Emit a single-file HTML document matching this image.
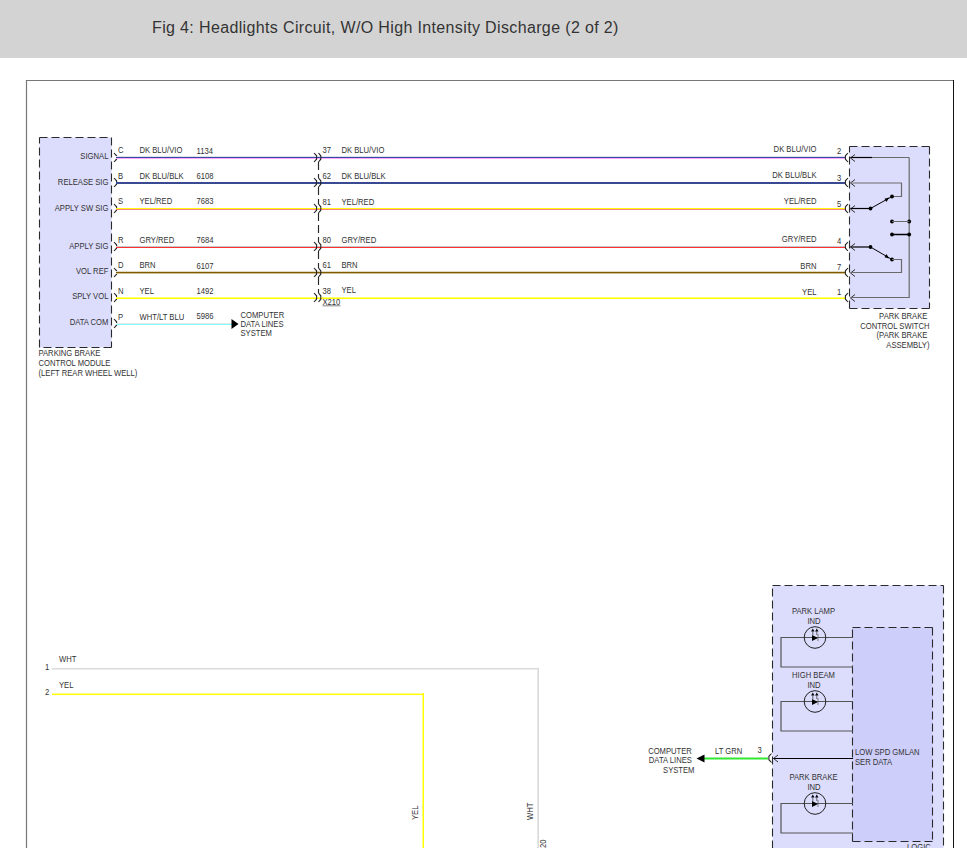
<!DOCTYPE html>
<html><head><meta charset="utf-8">
<style>
html,body{margin:0;padding:0;background:#fff;width:967px;height:868px;overflow:hidden;}
#hdr{position:absolute;left:0;top:0;width:967px;height:58px;background:#d3d3d3;}
#hdr span{position:absolute;left:152px;top:19px;font-family:"Liberation Sans",sans-serif;font-size:16px;letter-spacing:0.36px;color:#333;white-space:nowrap;}
svg{position:absolute;left:0;top:0;}
svg text{font-family:"Liberation Sans",sans-serif;fill:#333333;white-space:pre;}
</style></head><body>
<div id="hdr"><span>Fig 4: Headlights Circuit, W/O High Intensity Discharge (2 of 2)</span></div>
<svg width="967" height="868" viewBox="0 0 967 868">
<defs><clipPath id="c"><rect x="0" y="58" width="967" height="790"/></clipPath></defs>
<g clip-path="url(#c)">
<line x1="26.5" y1="80.5" x2="953" y2="80.5" stroke="#777" stroke-width="1.2" />
<line x1="26.5" y1="80" x2="26.5" y2="848" stroke="#777" stroke-width="1.2" />
<line x1="953.5" y1="80" x2="953.5" y2="848" stroke="#111" stroke-width="1" />
<rect x="39.5" y="137.5" width="72" height="210" fill="#dcdcfc"/>
<line x1="39.5" y1="137.5" x2="111.5" y2="137.5" stroke="#2a2a2a" stroke-width="1.1" stroke-dasharray="8 4"/>
<line x1="111.5" y1="137.5" x2="111.5" y2="347.5" stroke="#2a2a2a" stroke-width="1.1" stroke-dasharray="8 4"/>
<line x1="111.5" y1="347.5" x2="39.5" y2="347.5" stroke="#2a2a2a" stroke-width="1.1" stroke-dasharray="8 4"/>
<line x1="39.5" y1="347.5" x2="39.5" y2="137.5" stroke="#2a2a2a" stroke-width="1.1" stroke-dasharray="8 4"/>
<text transform="translate(108.4 159) scale(0.89 1)" text-anchor="end" font-size="8.6" >SIGNAL</text>
<path d="M114 153 L116.6 155.8 L116.6 159.2 L114 162" fill="none" stroke="#222" stroke-width="1.1"/>
<text transform="translate(118 153) scale(0.89 1)" text-anchor="start" font-size="8.6" >C</text>
<text transform="translate(139.5 153) scale(0.89 1)" text-anchor="start" font-size="8.6" >DK BLU/VIO</text>
<text transform="translate(196.5 153.5) scale(0.89 1)" text-anchor="start" font-size="8.6" >1134</text>
<rect x="116" y="157" width="729" height="1" fill="#3a48a0" />
<rect x="116" y="158" width="729" height="1" fill="#ffa8ff" />
<rect x="116" y="156" width="729" height="1" fill="#dde1ee" />
<text transform="translate(108.4 185) scale(0.89 1)" text-anchor="end" font-size="8.6" >RELEASE SIG</text>
<path d="M114 178 L116.6 180.8 L116.6 184.2 L114 187" fill="none" stroke="#222" stroke-width="1.1"/>
<text transform="translate(118 179) scale(0.89 1)" text-anchor="start" font-size="8.6" >B</text>
<text transform="translate(139.5 179) scale(0.89 1)" text-anchor="start" font-size="8.6" >DK BLU/BLK</text>
<text transform="translate(196.5 178.5) scale(0.89 1)" text-anchor="start" font-size="8.6" >6108</text>
<rect x="116" y="182" width="729" height="1" fill="#3a4a92" />
<rect x="116" y="183" width="729" height="1" fill="#3a4a92" />
<text transform="translate(108.4 211) scale(0.89 1)" text-anchor="end" font-size="8.6" >APPLY SW SIG</text>
<path d="M114 204 L116.6 206.8 L116.6 210.2 L114 213" fill="none" stroke="#222" stroke-width="1.1"/>
<text transform="translate(118 204) scale(0.89 1)" text-anchor="start" font-size="8.6" >S</text>
<text transform="translate(139.5 204) scale(0.89 1)" text-anchor="start" font-size="8.6" >YEL/RED</text>
<text transform="translate(196.5 203.5) scale(0.89 1)" text-anchor="start" font-size="8.6" >7683</text>
<rect x="116" y="208" width="729" height="1" fill="#fff810" />
<rect x="116" y="209" width="729" height="1" fill="#ff8080" />
<text transform="translate(108.4 249) scale(0.89 1)" text-anchor="end" font-size="8.6" >APPLY SIG</text>
<path d="M114 242 L116.6 244.8 L116.6 248.2 L114 251" fill="none" stroke="#222" stroke-width="1.1"/>
<text transform="translate(118 243) scale(0.89 1)" text-anchor="start" font-size="8.6" >R</text>
<text transform="translate(139.5 243) scale(0.89 1)" text-anchor="start" font-size="8.6" >GRY/RED</text>
<text transform="translate(196.5 242.5) scale(0.89 1)" text-anchor="start" font-size="8.6" >7684</text>
<rect x="116" y="246" width="729" height="1" fill="#c8c8c8" />
<rect x="116" y="247" width="729" height="1" fill="#ff3030" />
<text transform="translate(108.4 274) scale(0.89 1)" text-anchor="end" font-size="8.6" >VOL REF</text>
<path d="M114 268 L116.6 270.8 L116.6 274.2 L114 277" fill="none" stroke="#222" stroke-width="1.1"/>
<text transform="translate(118 268) scale(0.89 1)" text-anchor="start" font-size="8.6" >D</text>
<text transform="translate(139.5 268) scale(0.89 1)" text-anchor="start" font-size="8.6" >BRN</text>
<text transform="translate(196.5 268.5) scale(0.89 1)" text-anchor="start" font-size="8.6" >6107</text>
<rect x="116" y="272" width="729" height="1" fill="#7a5500" />
<rect x="116" y="273" width="729" height="1" fill="#9a7420" />
<rect x="116" y="271" width="729" height="3" fill="#ffffff" />
<rect x="116" y="271" width="729" height="1" fill="#e2d8c0" />
<rect x="116" y="272" width="729" height="1" fill="#7f5a00" />
<rect x="116" y="273" width="729" height="1" fill="#cdbd90" />
<text transform="translate(108.4 299) scale(0.89 1)" text-anchor="end" font-size="8.6" >SPLY VOL</text>
<path d="M114 293 L116.6 295.8 L116.6 299.2 L114 302" fill="none" stroke="#222" stroke-width="1.1"/>
<text transform="translate(118 294) scale(0.89 1)" text-anchor="start" font-size="8.6" >N</text>
<text transform="translate(139.5 294) scale(0.89 1)" text-anchor="start" font-size="8.6" >YEL</text>
<text transform="translate(196.5 293.5) scale(0.89 1)" text-anchor="start" font-size="8.6" >1492</text>
<rect x="116" y="297" width="729" height="1" fill="#ffff70" />
<rect x="116" y="298" width="729" height="1" fill="#ffff00" />
<text transform="translate(108.4 325) scale(0.89 1)" text-anchor="end" font-size="8.6" >DATA COM</text>
<path d="M114 319 L116.6 321.8 L116.6 325.2 L114 328" fill="none" stroke="#222" stroke-width="1.1"/>
<text transform="translate(118 320) scale(0.89 1)" text-anchor="start" font-size="8.6" >P</text>
<text transform="translate(139.5 320) scale(0.89 1)" text-anchor="start" font-size="8.6" >WHT/LT BLU</text>
<text transform="translate(196.5 318.5) scale(0.89 1)" text-anchor="start" font-size="8.6" >5986</text>
<rect x="116" y="323" width="116" height="1" fill="#e8e8e8" />
<rect x="116" y="324" width="116" height="1" fill="#80fcff" />
<path d="M231.5 319 L238.5 324 L231.5 329 Z" fill="#000"/>
<text transform="translate(240.5 318) scale(0.89 1)" text-anchor="start" font-size="8.6" >COMPUTER</text>
<text transform="translate(240.5 327) scale(0.89 1)" text-anchor="start" font-size="8.6" >DATA LINES</text>
<text transform="translate(240.5 336) scale(0.89 1)" text-anchor="start" font-size="8.6" >SYSTEM</text>
<text transform="translate(38.5 356) scale(0.89 1)" text-anchor="start" font-size="8.6" >PARKING BRAKE</text>
<text transform="translate(38.5 366) scale(0.89 1)" text-anchor="start" font-size="8.6" >CONTROL MODULE</text>
<text transform="translate(38.5 376) scale(0.89 1)" text-anchor="start" font-size="8.6" >(LEFT REAR WHEEL WELL)</text>
<path d="M314 153 L316.6 155.8 L316.6 159.2 L314 162" fill="none" stroke="#222" stroke-width="1.1"/>
<text transform="translate(322.5 153) scale(0.89 1)" text-anchor="start" font-size="8.6" >37</text>
<text transform="translate(341.5 153) scale(0.89 1)" text-anchor="start" font-size="8.6" >DK BLU/VIO</text>
<path d="M314 178 L316.6 180.8 L316.6 184.2 L314 187" fill="none" stroke="#222" stroke-width="1.1"/>
<text transform="translate(322.5 179) scale(0.89 1)" text-anchor="start" font-size="8.6" >62</text>
<text transform="translate(341.5 179) scale(0.89 1)" text-anchor="start" font-size="8.6" >DK BLU/BLK</text>
<path d="M314 204 L316.6 206.8 L316.6 210.2 L314 213" fill="none" stroke="#222" stroke-width="1.1"/>
<text transform="translate(322.5 205) scale(0.89 1)" text-anchor="start" font-size="8.6" >81</text>
<text transform="translate(341.5 205) scale(0.89 1)" text-anchor="start" font-size="8.6" >YEL/RED</text>
<path d="M314 242 L316.6 244.8 L316.6 248.2 L314 251" fill="none" stroke="#222" stroke-width="1.1"/>
<text transform="translate(322.5 243) scale(0.89 1)" text-anchor="start" font-size="8.6" >80</text>
<text transform="translate(341.5 243) scale(0.89 1)" text-anchor="start" font-size="8.6" >GRY/RED</text>
<path d="M314 268 L316.6 270.8 L316.6 274.2 L314 277" fill="none" stroke="#222" stroke-width="1.1"/>
<text transform="translate(322.5 268) scale(0.89 1)" text-anchor="start" font-size="8.6" >61</text>
<text transform="translate(341.5 268) scale(0.89 1)" text-anchor="start" font-size="8.6" >BRN</text>
<path d="M314 293 L316.6 295.8 L316.6 299.2 L314 302" fill="none" stroke="#222" stroke-width="1.1"/>
<text transform="translate(322.5 294) scale(0.89 1)" text-anchor="start" font-size="8.6" >38</text>
<text transform="translate(341.5 293) scale(0.89 1)" text-anchor="start" font-size="8.6" >YEL</text>
<path d="M318.5 153 L320.8 155.8 L320.8 159.2 L318.5 162" fill="none" stroke="#222" stroke-width="1.1"/>
<path d="M318.5 178 L320.8 180.8 L320.8 184.2 L318.5 187" fill="none" stroke="#222" stroke-width="1.1"/>
<path d="M318.5 204 L320.8 206.8 L320.8 210.2 L318.5 213" fill="none" stroke="#222" stroke-width="1.1"/>
<path d="M318.5 242 L320.8 244.8 L320.8 248.2 L318.5 251" fill="none" stroke="#222" stroke-width="1.1"/>
<path d="M318.5 268 L320.8 270.8 L320.8 274.2 L318.5 277" fill="none" stroke="#222" stroke-width="1.1"/>
<path d="M318.5 293 L320.8 295.8 L320.8 299.2 L318.5 302" fill="none" stroke="#222" stroke-width="1.1"/>
<path d="M318.5 162 L318.5 178 M318.5 187 L318.5 204 M318.5 213 L318.5 242 M318.5 251 L318.5 268 M318.5 277 L318.5 293 " fill="none" stroke="#282828" stroke-width="1.15" stroke-dasharray="8 4"/>
<text transform="translate(322.5 304.5) scale(0.89 1)" text-anchor="start" font-size="8.6" >X210</text>
<line x1="322.5" y1="305.8" x2="340.5" y2="305.8" stroke="#666" stroke-width="0.8" />
<text transform="translate(816.5 152) scale(0.89 1)" text-anchor="end" font-size="8.6" >DK BLU/VIO</text>
<text transform="translate(837 154) scale(0.89 1)" text-anchor="start" font-size="8.6" >2</text>
<path d="M848 153 L845.4 155.8 L845.4 159.2 L848 162" fill="none" stroke="#222" stroke-width="1.1"/>
<text transform="translate(816.5 178) scale(0.89 1)" text-anchor="end" font-size="8.6" >DK BLU/BLK</text>
<text transform="translate(837 180.5) scale(0.89 1)" text-anchor="start" font-size="8.6" >3</text>
<path d="M848 178 L845.4 180.8 L845.4 184.2 L848 187" fill="none" stroke="#222" stroke-width="1.1"/>
<text transform="translate(816.5 204) scale(0.89 1)" text-anchor="end" font-size="8.6" >YEL/RED</text>
<text transform="translate(837 206.5) scale(0.89 1)" text-anchor="start" font-size="8.6" >5</text>
<path d="M848 204 L845.4 206.8 L845.4 210.2 L848 213" fill="none" stroke="#222" stroke-width="1.1"/>
<text transform="translate(816.5 242) scale(0.89 1)" text-anchor="end" font-size="8.6" >GRY/RED</text>
<text transform="translate(837 244) scale(0.89 1)" text-anchor="start" font-size="8.6" >4</text>
<path d="M848 242 L845.4 244.8 L845.4 248.2 L848 251" fill="none" stroke="#222" stroke-width="1.1"/>
<text transform="translate(816.5 268.5) scale(0.89 1)" text-anchor="end" font-size="8.6" >BRN</text>
<text transform="translate(837 270) scale(0.89 1)" text-anchor="start" font-size="8.6" >7</text>
<path d="M848 268 L845.4 270.8 L845.4 274.2 L848 277" fill="none" stroke="#222" stroke-width="1.1"/>
<text transform="translate(816.5 295) scale(0.89 1)" text-anchor="end" font-size="8.6" >YEL</text>
<text transform="translate(837 295) scale(0.89 1)" text-anchor="start" font-size="8.6" >1</text>
<path d="M848 293 L845.4 295.8 L845.4 299.2 L848 302" fill="none" stroke="#222" stroke-width="1.1"/>
<rect x="849.5" y="146.5" width="80" height="162" fill="#dcdcfc"/>
<line x1="849.5" y1="146.5" x2="929.5" y2="146.5" stroke="#2a2a2a" stroke-width="1.1" stroke-dasharray="8 4"/>
<line x1="929.5" y1="146.5" x2="929.5" y2="308.5" stroke="#2a2a2a" stroke-width="1.1" stroke-dasharray="8 4"/>
<line x1="929.5" y1="308.5" x2="849.5" y2="308.5" stroke="#2a2a2a" stroke-width="1.1" stroke-dasharray="8 4"/>
<line x1="849.5" y1="308.5" x2="849.5" y2="146.5" stroke="#2a2a2a" stroke-width="1.1" stroke-dasharray="8 4"/>
<path d="M855.0 154.5 L850.5 158 L855.0 161.5" fill="none" stroke="#333" stroke-width="1"/>
<path d="M855.0 179.5 L850.5 183 L855.0 186.5" fill="none" stroke="#333" stroke-width="1"/>
<path d="M855.0 205.5 L850.5 209 L855.0 212.5" fill="none" stroke="#333" stroke-width="1"/>
<path d="M855.0 243.5 L850.5 247 L855.0 250.5" fill="none" stroke="#333" stroke-width="1"/>
<path d="M855.0 269.5 L850.5 273 L855.0 276.5" fill="none" stroke="#333" stroke-width="1"/>
<path d="M855.0 294.5 L850.5 298 L855.0 301.5" fill="none" stroke="#333" stroke-width="1"/>
<line x1="850.5" y1="157.5" x2="909.2" y2="157.5" stroke="#6a6a6a" stroke-width="1.2" />
<line x1="850.5" y1="157.5" x2="872" y2="157.5" stroke="#000" stroke-width="1.2" />
<line x1="909.2" y1="157.5" x2="909.2" y2="298" stroke="#6a6a6a" stroke-width="1.2" />
<line x1="850.5" y1="297.5" x2="909.2" y2="297.5" stroke="#6a6a6a" stroke-width="1.2" />
<path d="M850.5 183 L901.5 183 L901.5 196.5 L892 196.5" fill="none" stroke="#6a6a6a" stroke-width="1.2"/>
<line x1="850.5" y1="208.5" x2="870.5" y2="208.5" stroke="#000" stroke-width="1.2" />
<line x1="870.5" y1="208.5" x2="892" y2="196.5" stroke="#000" stroke-width="1" />
<path d="M889 197.5 L884.5 198.8 L886.5 202 Z" fill="#000"/>
<circle cx="870.5" cy="208.5" r="1.9" fill="#000"/>
<circle cx="892" cy="196.5" r="1.9" fill="#000"/>
<circle cx="892" cy="221.5" r="1.9" fill="#000"/>
<circle cx="909.2" cy="221.5" r="1.9" fill="#000"/>
<circle cx="892" cy="234.5" r="1.9" fill="#000"/>
<circle cx="909.2" cy="234.5" r="1.9" fill="#000"/>
<circle cx="870.5" cy="247" r="1.9" fill="#000"/>
<circle cx="892" cy="259.5" r="1.9" fill="#000"/>
<line x1="892" y1="221.5" x2="909.5" y2="221.5" stroke="#6a6a6a" stroke-width="1" />
<line x1="892" y1="234.5" x2="909.2" y2="234.5" stroke="#000" stroke-width="1.5" />
<line x1="850.5" y1="247" x2="870.5" y2="247" stroke="#000" stroke-width="1.2" />
<line x1="870.5" y1="247" x2="892" y2="259.5" stroke="#000" stroke-width="1" />
<path d="M889 258.5 L884.5 257.2 L886.5 254 Z" fill="#000"/>
<path d="M892 259.5 L901.5 259.5 L901.5 272.5 L850.5 272.5" fill="none" stroke="#6a6a6a" stroke-width="1.2"/>
<text transform="translate(929.5 319) scale(0.89 1)" text-anchor="end" font-size="8.6" >PARK BRAKE </text>
<text transform="translate(929.5 328.5) scale(0.89 1)" text-anchor="end" font-size="8.6" >CONTROL SWITCH</text>
<text transform="translate(929.5 338) scale(0.89 1)" text-anchor="end" font-size="8.6" >(PARK BRAKE </text>
<text transform="translate(929.5 347.5) scale(0.89 1)" text-anchor="end" font-size="8.6" >ASSEMBLY)</text>
<text transform="translate(45 669.5) scale(0.89 1)" text-anchor="start" font-size="8.6" >1</text>
<text transform="translate(59 661.5) scale(0.89 1)" text-anchor="start" font-size="8.6" >WHT</text>
<text transform="translate(45 694.5) scale(0.89 1)" text-anchor="start" font-size="8.6" >2</text>
<text transform="translate(59 687.5) scale(0.89 1)" text-anchor="start" font-size="8.6" >YEL</text>
<rect x="52" y="668" width="487" height="1" fill="#dadada" />
<rect x="52" y="669" width="486" height="1" fill="#ececec" />
<rect x="537" y="669" width="1" height="180" fill="#e8e8e8" />
<rect x="538" y="668" width="1" height="181" fill="#dadada" />
<rect x="52" y="693" width="371" height="1" fill="#ffff90" />
<rect x="52" y="694" width="372" height="1" fill="#ffff00" />
<rect x="52" y="695" width="370" height="1" fill="#fffff0" />
<rect x="422" y="695" width="1" height="154" fill="#ffff80" />
<rect x="423" y="693" width="1" height="156" fill="#ffff00" />
<text transform="translate(418,820) rotate(-90) scale(0.89 1)" font-size="8.6">YEL</text>
<text transform="translate(533,820) rotate(-90) scale(0.89 1)" font-size="8.6">WHT</text>
<text transform="translate(546,848) rotate(-90) scale(0.89 1)" font-size="8.6">20</text>
<rect x="772.5" y="585.5" width="171" height="275" fill="#dcdcfc"/>
<line x1="772.5" y1="585.5" x2="943.5" y2="585.5" stroke="#2a2a2a" stroke-width="1.1" stroke-dasharray="8 4"/>
<line x1="943.5" y1="585.5" x2="943.5" y2="860.5" stroke="#2a2a2a" stroke-width="1.1" stroke-dasharray="8 4"/>
<line x1="943.5" y1="860.5" x2="772.5" y2="860.5" stroke="#2a2a2a" stroke-width="1.1" stroke-dasharray="8 4"/>
<line x1="772.5" y1="860.5" x2="772.5" y2="585.5" stroke="#2a2a2a" stroke-width="1.1" stroke-dasharray="8 4"/>
<rect x="852.5" y="627.5" width="80" height="214" fill="#cecefb"/>
<line x1="852.5" y1="627.5" x2="932.5" y2="627.5" stroke="#2a2a2a" stroke-width="1.1" stroke-dasharray="8 4"/>
<line x1="932.5" y1="627.5" x2="932.5" y2="841.5" stroke="#2a2a2a" stroke-width="1.1" stroke-dasharray="8 4"/>
<line x1="932.5" y1="841.5" x2="852.5" y2="841.5" stroke="#2a2a2a" stroke-width="1.1" stroke-dasharray="8 4"/>
<line x1="852.5" y1="841.5" x2="852.5" y2="627.5" stroke="#2a2a2a" stroke-width="1.1" stroke-dasharray="8 4"/>
<path d="M853 637.5 L781 637.5 L781 667 L853 667" fill="none" stroke="#555" stroke-width="1.2"/>
<circle cx="815" cy="637.5" r="10.8" fill="none" stroke="#222" stroke-width="1"/>
<path d="M812 635.0 L818 638.0 L812 641.0 Z" fill="#000"/>
<line x1="818" y1="634.0" x2="818" y2="641.0" stroke="#555" stroke-width="0.7" />
<line x1="812.8" y1="631.5" x2="812.8" y2="635.0" stroke="#333" stroke-width="0.7" />
<path d="M811.0999999999999 631.5 L812.8 628.5 L814.5 631.5 Z" fill="#000"/>
<line x1="816.8" y1="631.5" x2="816.8" y2="635.0" stroke="#333" stroke-width="0.7" />
<path d="M815.0999999999999 631.5 L816.8 628.5 L818.5 631.5 Z" fill="#000"/>
<text transform="translate(813.5 613.5) scale(0.89 1)" text-anchor="middle" font-size="8.6" >PARK LAMP</text>
<text transform="translate(814 624.0) scale(0.89 1)" text-anchor="middle" font-size="8.6" >IND</text>
<path d="M853 701.5 L781 701.5 L781 731 L853 731" fill="none" stroke="#555" stroke-width="1.2"/>
<circle cx="815" cy="701.5" r="10.8" fill="none" stroke="#222" stroke-width="1"/>
<path d="M812 699.0 L818 702.0 L812 705.0 Z" fill="#000"/>
<line x1="818" y1="698.0" x2="818" y2="705.0" stroke="#555" stroke-width="0.7" />
<line x1="812.8" y1="695.5" x2="812.8" y2="699.0" stroke="#333" stroke-width="0.7" />
<path d="M811.0999999999999 695.5 L812.8 692.5 L814.5 695.5 Z" fill="#000"/>
<line x1="816.8" y1="695.5" x2="816.8" y2="699.0" stroke="#333" stroke-width="0.7" />
<path d="M815.0999999999999 695.5 L816.8 692.5 L818.5 695.5 Z" fill="#000"/>
<text transform="translate(813.5 677.5) scale(0.89 1)" text-anchor="middle" font-size="8.6" >HIGH BEAM</text>
<text transform="translate(814 688.0) scale(0.89 1)" text-anchor="middle" font-size="8.6" >IND</text>
<path d="M853 803.5 L781 803.5 L781 833 L853 833" fill="none" stroke="#555" stroke-width="1.2"/>
<circle cx="815" cy="803.5" r="10.8" fill="none" stroke="#222" stroke-width="1"/>
<path d="M812 801.0 L818 804.0 L812 807.0 Z" fill="#000"/>
<line x1="818" y1="800.0" x2="818" y2="807.0" stroke="#555" stroke-width="0.7" />
<line x1="812.8" y1="797.5" x2="812.8" y2="801.0" stroke="#333" stroke-width="0.7" />
<path d="M811.0999999999999 797.5 L812.8 794.5 L814.5 797.5 Z" fill="#000"/>
<line x1="816.8" y1="797.5" x2="816.8" y2="801.0" stroke="#333" stroke-width="0.7" />
<path d="M815.0999999999999 797.5 L816.8 794.5 L818.5 797.5 Z" fill="#000"/>
<text transform="translate(813.5 779.5) scale(0.89 1)" text-anchor="middle" font-size="8.6" >PARK BRAKE</text>
<text transform="translate(814 790.0) scale(0.89 1)" text-anchor="middle" font-size="8.6" >IND</text>
<line x1="773" y1="758.5" x2="853" y2="758.5" stroke="#000" stroke-width="1.2" />
<path d="M778.0 755.0 L773.5 758.5 L778.0 762.0" fill="none" stroke="#333" stroke-width="1"/>
<rect x="704" y="757.5" width="64" height="2" fill="#33e833" />
<path d="M696.5 758.5 L704.5 754.5 L704.5 762.5 Z" fill="#000"/>
<path d="M771.5 753.5 L768.9 756.3 L768.9 759.7 L771.5 762.5" fill="none" stroke="#222" stroke-width="1.1"/>
<text transform="translate(694 754) scale(0.89 1)" text-anchor="end" font-size="8.6" >COMPUTER </text>
<text transform="translate(694 763) scale(0.89 1)" text-anchor="end" font-size="8.6" >DATA LINES </text>
<text transform="translate(694.5 772.5) scale(0.89 1)" text-anchor="end" font-size="8.6" >SYSTEM</text>
<text transform="translate(715 754) scale(0.89 1)" text-anchor="start" font-size="8.6" >LT GRN</text>
<text transform="translate(757.5 753) scale(0.89 1)" text-anchor="start" font-size="8.6" >3</text>
<text transform="translate(855 755) scale(0.89 1)" text-anchor="start" font-size="8.6" >LOW SPD GMLAN</text>
<text transform="translate(855 765) scale(0.89 1)" text-anchor="start" font-size="8.6" >SER DATA</text>
<text transform="translate(907 850) scale(0.89 1)" text-anchor="start" font-size="8.6" >LOGIC</text>
</g>
</svg>
</body></html>
